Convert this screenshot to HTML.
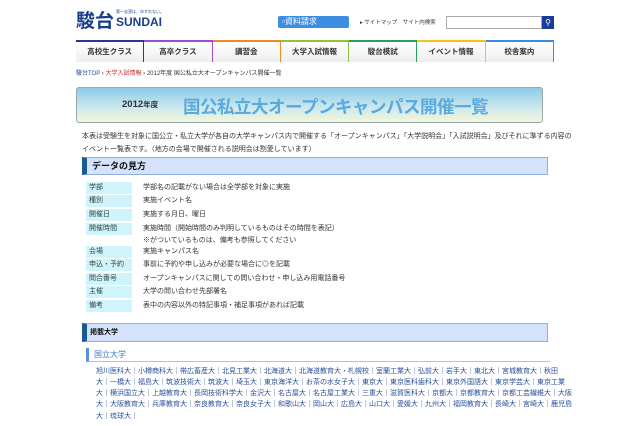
<!DOCTYPE html>
<html><head><meta charset="utf-8"><style>
*{margin:0;padding:0;box-sizing:border-box}
body{width:640px;height:426px;overflow:hidden;background:#fff;font-family:"Liberation Sans","Noto Sans CJK JP",sans-serif;color:#333;position:relative}
.a{position:absolute;white-space:nowrap}
.nav{position:absolute;left:76px;top:40px;width:478px;height:22px;display:flex}
.nav div{flex:1;border-top:2px solid;background:linear-gradient(#fff,#eee);border-right:1px solid #ddd;font-size:7.5px;font-weight:bold;text-align:center;line-height:20px;color:#333}
.hd{position:absolute;left:82px;width:466px;background:#d4e3fb;border:1px solid #8fb0d8;border-left:5px solid #1a5a92;font-weight:bold;color:#111}
.row{position:absolute;left:86px;font-size:7px;line-height:12px}
.row b{position:absolute;left:0;width:46px;background:#cff4fb;padding-left:3px;font-weight:normal;color:#344}
.row span{position:absolute;left:57px;white-space:nowrap}
.u{position:absolute;left:96px;font-size:7px;color:#2a4f9a;white-space:nowrap;line-height:11px}
</style></head><body>
<div class="a" style="left:76px;top:6px;font-size:19px;font-weight:bold;color:#1a3f8a">駿台</div>
<div class="a" style="left:116px;top:9px;font-size:4px;color:#1a3f8a">第一志望は、ゆずれない。</div>
<div class="a" style="left:116px;top:15px;font-size:12px;font-weight:bold;color:#1a3f8a">SUNDAI</div>
<div class="a" style="left:278px;top:16px;width:71px;height:12px;background:#3e8ee0;border-radius:2px;color:#fff;font-size:8px;line-height:12px;padding-left:4px">▫資料請求</div>
<div class="a" style="left:360px;top:18px;font-size:5.5px;color:#333">▸ サイトマップ　サイト内検索</div>
<div class="a" style="left:446px;top:16px;width:96px;height:13px;border:1px solid #aaa"></div>
<div class="a" style="left:542px;top:16px;width:12px;height:13px;background:#1c3c9a;color:#fff;font-size:8px;text-align:center;line-height:13px">⚲</div>
<div class="nav">
<div style="border-color:#1f3f8a">高校生クラス</div><div style="border-color:#9a4ec8">高卒クラス</div><div style="border-color:#f08a24">講習会</div><div style="border-color:#8cc43c">大学入試情報</div><div style="border-color:#2ca05a">駿台模試</div><div style="border-color:#f5c21a">イベント情報</div><div style="border-color:#3a8ee0">校舎案内</div></div>
<div class="a" style="left:76px;top:68px;font-size:6px;color:#333"><span style="color:#2a4f9a">駿台TOP</span> › <span style="color:#c03030">大学入試情報</span> › 2012年度 国公私立大オープンキャンパス開催一覧</div>
<div class="a" style="left:76px;top:87px;width:467px;height:36px;border:1px solid #9aa;border-radius:3px;background:linear-gradient(#8ccbe6,#cfe9ee 60%,#f2f6d8)"></div>
<div class="a" style="left:122px;top:99px;font-size:9.5px;font-weight:bold;color:#333">2012<span style="font-size:7.5px">年度</span></div>
<div class="a" style="left:183px;top:94px;font-size:17.5px;font-weight:bold;color:#5aa9df;letter-spacing:-0.5px">国公私立大オープンキャンパス開催一覧</div>
<div class="a" style="left:82px;top:131px;font-size:7px;line-height:12.5px;color:#333">本表は受験生を対象に国公立・私立大学が各自の大学キャンパス内で開催する「オープンキャンパス」「大学説明会」「入試説明会」及びそれに準ずる内容の<br>イベント一覧表です。（地方の会場で開催される説明会は割愛しています）</div>
<div class="hd" style="top:157px;height:18px;font-size:9px;line-height:16px;padding-left:5px">データの見方</div>
<div class="row" style="top:182px"><b>学部</b><span>学部名の記載がない場合は全学部を対象に実施</span></div>
<div class="row" style="top:195px"><b>種別</b><span>実施イベント名</span></div>
<div class="row" style="top:209px"><b>開催日</b><span>実施する月日、曜日</span></div>
<div class="row" style="top:223px"><b>開催時間</b><span>実施時間（開始時間のみ判明しているものはその時間を表記）<br>※がついているものは、備考も参照してください</span></div>
<div class="row" style="top:246px"><b>会場</b><span>実施キャンパス名</span></div>
<div class="row" style="top:259px"><b>申込・予約</b><span>事前に予約や申し込みが必要な場合に◎を記載</span></div>
<div class="row" style="top:273px"><b>問合番号</b><span>オープンキャンパスに関しての問い合わせ・申し込み用電話番号</span></div>
<div class="row" style="top:286px"><b>主催</b><span>大学の問い合わせ先部署名</span></div>
<div class="row" style="top:300px"><b>備考</b><span>表中の内容以外の特記事項・補足事項があれば記載</span></div>
<div class="hd" style="top:323px;height:19px;font-size:7px;line-height:17px;padding-left:3px">掲載大学</div>
<div class="a" style="left:86px;top:348px;width:464px;height:14px;border-left:3px solid #5a90e0;border-bottom:1px solid #a8c4e8;font-size:8px;color:#3a78d0;padding-left:5px;line-height:13px">国立大学</div>
<div class="u" style="top:366px">旭川医科大｜小樽商科大｜帯広畜産大｜北見工業大｜北海道大｜北海道教育大・札幌校｜室蘭工業大｜弘前大｜岩手大｜東北大｜宮城教育大｜秋田</div>
<div class="u" style="top:377px">大｜一橋大｜福島大｜筑波技術大｜筑波大｜埼玉大｜東京海洋大｜お茶の水女子大｜東京大｜東京医科歯科大｜東京外国語大｜東京学芸大｜東京工業</div>
<div class="u" style="top:388px">大｜横浜国立大｜上越教育大｜長岡技術科学大｜金沢大｜名古屋大｜名古屋工業大｜三重大｜滋賀医科大｜京都大｜京都教育大｜京都工芸繊維大｜大阪</div>
<div class="u" style="top:399px">大｜大阪教育大｜兵庫教育大｜奈良教育大｜奈良女子大｜和歌山大｜岡山大｜広島大｜山口大｜愛媛大｜九州大｜福岡教育大｜長崎大｜宮崎大｜鹿児島</div>
<div class="u" style="top:411px">大｜琉球大｜</div>
</body></html>
